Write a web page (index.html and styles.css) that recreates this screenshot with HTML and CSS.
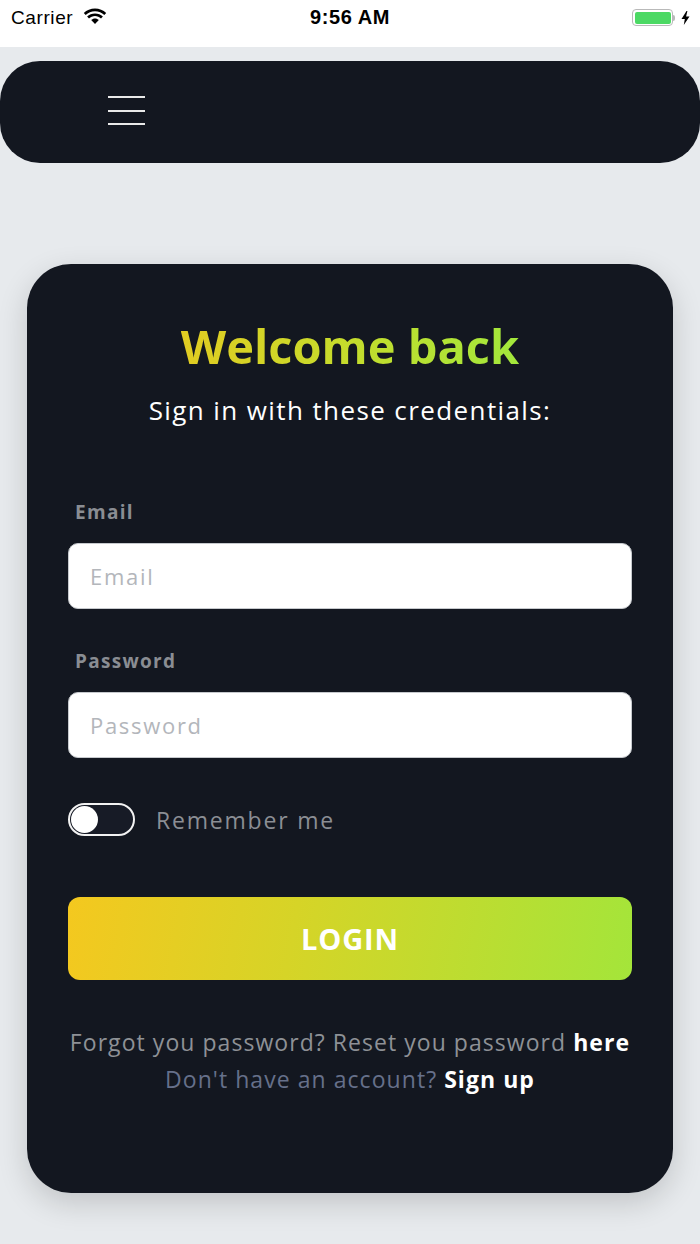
FILE: index.html
```html
<!DOCTYPE html>
<html>
<head>
<meta charset="utf-8">
<link rel="stylesheet" href="styles.css">
</head>
<body>
<div class="status">
  <div class="status-left">
    <span class="carrier">Carrier</span>
    <svg class="wifi" width="24" height="18" viewBox="0 0 24 18">
      <path d="M12 3.2c3.6 0 6.9 1.4 9.3 3.7l1.9-2C20.3 2.1 16.3.4 12 .4S3.7 2.1.8 4.9l1.9 2C5.1 4.6 8.4 3.2 12 3.2z" fill="#000"/>
      <path d="M12 8.1c2.3 0 4.4.9 6 2.4l1.9-2C17.8 6.6 15 5.4 12 5.4S6.2 6.6 4.1 8.5l1.9 2c1.6-1.5 3.7-2.4 6-2.4z" fill="#000"/>
      <path d="M12 10.4c-1.5 0-2.8.6-3.8 1.5L12 16l3.8-4.1c-1-.9-2.3-1.5-3.8-1.5z" fill="#000"/>
    </svg>
  </div>
  <div class="time">9:56 AM</div>
  <div class="status-right">
    <div class="battery"><div class="battery-fill"></div></div>
    <div class="battery-cap"></div>
    <svg class="bolt" width="9" height="14" viewBox="0 0 9 14"><path d="M5.5 0L0.5 8h3.3L2.8 14l5.7-8.6H5.1L6.4 0z" fill="#000"/></svg>
  </div>
</div>

<div class="page">
  <nav class="navbar">
    <div class="burger"><span></span><span></span><span></span></div>
  </nav>

  <section class="card">
    <h1 class="title">Welcome back</h1>
    <p class="subtitle">Sign in with these credentials:</p>

    <label class="label">Email</label>
    <div class="input"><span class="placeholder">Email</span></div>

    <label class="label label-pw">Password</label>
    <div class="input"><span class="placeholder">Password</span></div>

    <div class="remember">
      <div class="toggle"><div class="knob"></div></div>
      <span class="remember-text">Remember me</span>
    </div>

    <button class="login">LOGIN</button>

    <div class="footer">
      <p class="forgot">Forgot you password? Reset you password <b>here</b></p>
      <p class="signup">Don't have an account? <b>Sign up</b></p>
    </div>
  </section>
</div>
</body>
</html>
```

FILE: styles.css
```css
* { box-sizing: border-box; }
html, body { margin: 0; padding: 0; }
body {
  width: 700px;
  height: 1244px;
  background: #e7eaed;
  font-family: "Open Sans", "Liberation Sans", sans-serif;
  overflow: hidden;
}

.status {
  height: 47px;
  background: #ffffff;
  display: flex;
  align-items: center;
  justify-content: space-between;
  padding: 0 10px 12px 11px;
  position: relative;
  font-family: "Liberation Sans", Arial, sans-serif;
}
.status-left { display: flex; align-items: center; gap: 10px; }
.carrier { font-size: 19px; color: #000; letter-spacing: 0.6px; }
.wifi { margin-top: -2px; }
.time {
  position: absolute;
  left: 0; right: 0;
  top: 6px;
  text-align: center;
  font-size: 20px;
  font-weight: bold;
  letter-spacing: 0.6px;
  color: #000;
  pointer-events: none;
}
.status-right { display: flex; align-items: center; }
.battery {
  width: 41px;
  height: 17px;
  border: 1.5px solid #b9b9b9;
  border-radius: 4px;
  padding: 1.5px;
}
.battery-fill { width: 100%; height: 100%; background: #4cd964; border-radius: 2px; }
.battery-cap { width: 2px; height: 6px; background: #b9b9b9; border-radius: 0 2px 2px 0; margin-right: 6px; }
.bolt { display: block; }

.page { padding-top: 14px; }

.navbar {
  height: 102px;
  background: #131720;
  border-radius: 40px;
  display: flex;
  align-items: center;
  padding-left: 108px;
}
.burger {
  width: 37px;
  display: flex;
  flex-direction: column;
  gap: 11.5px;
  margin-top: -3px;
}
.burger span { display: block; height: 2px; background: #e9e9e9; }

.card {
  margin: 101px 0 0 27px;
  width: 646px;
  height: 929px;
  background: #131720;
  border-radius: 44px;
  box-shadow: 0 10px 30px rgba(0, 0, 0, 0.16);
  padding: 55px 41px 0;
  display: flex;
  flex-direction: column;
}

.title {
  margin: 0;
  font-size: 47px;
  line-height: 54px;
  font-weight: 700;
  text-align: center;
  letter-spacing: 0;
  background: linear-gradient(90deg, #e1cc22 0%, #c5dc2c 50%, #a3e83c 100%);
  -webkit-background-clip: text;
  background-clip: text;
  color: transparent;
  align-self: center;
}
.subtitle {
  margin: 20px 0 0;
  font-size: 26px;
  line-height: 34px;
  color: #ffffff;
  text-align: center;
  font-weight: 400;
  letter-spacing: 1.4px;
}

.label {
  display: block;
  margin: 73px 0 0 7px;
  font-size: 19px;
  line-height: 24px;
  font-weight: 700;
  letter-spacing: 1.3px;
  color: #8a8d93;
}
.label-pw { margin-top: 40px; }

.input {
  margin-top: 19px;
  height: 66px;
  background: #ffffff;
  border: 1.5px solid #c6c9cd;
  border-radius: 10px;
  display: flex;
  align-items: center;
  padding-left: 21px;
}
.placeholder { font-size: 22px; color: #b3b6bb; letter-spacing: 1.7px; }

.remember {
  margin-top: 45px;
  display: flex;
  align-items: center;
  gap: 21px;
}
.toggle {
  width: 67px;
  height: 33px;
  border: 2px solid #f2f2f2;
  border-radius: 17px;
  background: #171b26;
  padding: 1px;
}
.knob { width: 27px; height: 27px; border-radius: 50%; background: #ffffff; }
.remember-text { font-size: 23px; color: #8b8e94; letter-spacing: 1.8px; }

.login {
  margin-top: 61px;
  height: 83px;
  width: 100%;
  border: none;
  border-radius: 12px;
  background: linear-gradient(100deg, #f4c81f 0%, #d6d427 40%, #a4e53a 100%);
  color: #ffffff;
  font-family: inherit;
  font-size: 29px;
  font-weight: 700;
  letter-spacing: 0.9px;
}

.footer { margin-top: 44px; text-align: center; }
.footer p { margin: 0; font-size: 23px; line-height: 37px; letter-spacing: 1.05px; }
.forgot { color: #8e9196; }
.signup { color: #66708a; }
.footer b { color: #ffffff; font-weight: 700; }
```
